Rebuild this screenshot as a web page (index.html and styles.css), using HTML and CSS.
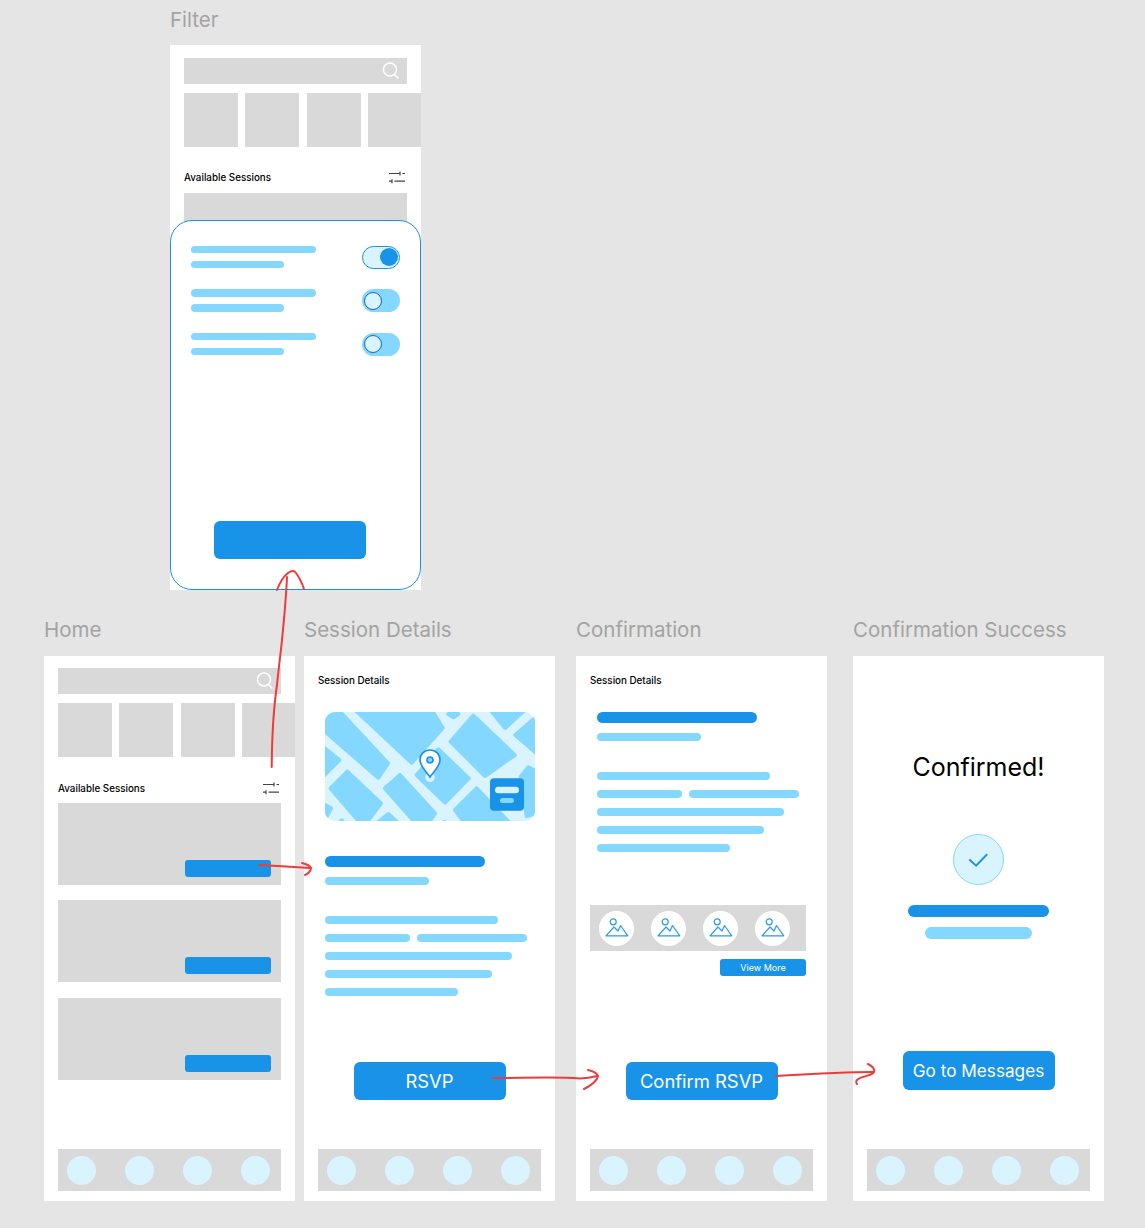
FILE: index.html
```html
<!doctype html>
<html lang="en">
  <head>
    <meta charset="utf-8" />
    <title>Wireframes</title>
    <link rel="stylesheet" href="styles.css">
  </head>
  <body>
    <svg class="defs" width="0" height="0">
      <symbol id="search" viewBox="0 0 18 18">
        <circle cx="8" cy="7.500" r="6.500" fill="none" stroke="#fff" stroke-width="1.5" />
        <path d="M12.500 12.500l4 4" fill="none" stroke="#fff" stroke-width="1.5" />
      </symbol>
      <symbol id="sliders" viewBox="0 0 18 14">
        <path d="M1 2.500h11M12 .500v4M14.500 2.500h2.500M1 10.200h2.500M4 8.200v4M6.500 10.200h10.500" fill="none" stroke="#444" stroke-width="1.200" />
      </symbol>
      <symbol id="picture" viewBox="0 0 35 35">
        <circle cx="14.200" cy="10.800" r="3" fill="none" stroke="#2a9bea" stroke-width="1.200" />
        <path d="M7 24.800l8-8.800 4 4 2.500-5.500 7.300 10.300z" fill="none" stroke="#2a9bea" stroke-width="1.200" stroke-linejoin="round" />
      </symbol>
    </svg>

    <section class="screen screen-filter">
      <h2 class="screen-name">Filter</h2>
      <div class="frame frame-home frame-filter">
        <div class="search"><svg class="search-icon"><use href="#search" /></svg></div>
        <div class="tiles">
          <div class="tile"></div><div class="tile"></div><div class="tile"></div><div class="tile"></div>
        </div>
        <div class="list-head">
          <span class="small-title">Available Sessions</span>
          <svg class="sliders"><use href="#sliders" /></svg>
        </div>
        <div class="card"></div>

        <div class="sheet">
          <div class="sheet-row">
            <div class="sheet-text"><div class="line line-long"></div><div class="line line-short"></div></div>
            <div class="toggle toggle-on"><span class="knob"></span></div>
          </div>
          <div class="sheet-row">
            <div class="sheet-text"><div class="line line-long"></div><div class="line line-short"></div></div>
            <div class="toggle"><span class="knob"></span></div>
          </div>
          <div class="sheet-row">
            <div class="sheet-text"><div class="line line-long"></div><div class="line line-short"></div></div>
            <div class="toggle"><span class="knob"></span></div>
          </div>
          <div class="btn sheet-btn"></div>
        </div>
      </div>
    </section>

    <section class="screen screen-home">
      <h2 class="screen-name">Home</h2>
      <div class="frame frame-home">
        <div class="search"><svg class="search-icon"><use href="#search" /></svg></div>
        <div class="tiles">
          <div class="tile"></div><div class="tile"></div><div class="tile"></div><div class="tile"></div>
        </div>
        <div class="list-head">
          <span class="small-title">Available Sessions</span>
          <svg class="sliders"><use href="#sliders" /></svg>
        </div>
        <div class="cards">
          <div class="card"><div class="card-btn"></div></div>
          <div class="card"><div class="card-btn"></div></div>
          <div class="card"><div class="card-btn"></div></div>
        </div>
        <div class="nav"><span></span><span></span><span></span><span></span></div>
      </div>
    </section>

    <section class="screen screen-details">
      <h2 class="screen-name">Session Details</h2>
      <div class="frame">
        <div class="small-title page-title">Session Details</div>
        <svg class="map" viewBox="45 36 630 327">
          <rect x="45" y="36" width="630" height="327" fill="#d9f3ff" />
          <g fill="#84d7ff" stroke="#84d7ff" stroke-width="12" stroke-linejoin="round">
            <polygon points="136,30 365,30 398,84 305,188" />
            <polygon points="85,30 234,190 205,233 51,100 40,30" />
            <polygon points="415,42 445,42 430,52" />
            <polygon points="490,47 614,165 525,228 422,125" />
            <polygon points="542,30 644,30 585,84" />
            <polygon points="616,105 680,50 680,160" />
            <polygon points="40,142 88,180 40,228" />
            <polygon points="385,148 476,235 405,308 320,225" />
            <polygon points="112,215 213,310 168,370 152,370 62,265" />
            <polygon points="270,225 375,340 355,370 318,370 225,265" />
            <polygon points="500,265 600,370 465,370 435,330" />
            <polygon points="655,202 680,215 680,340 650,348 632,230" />
            <polygon points="40,312 63,325 50,350 40,350" />
            <polygon points="235,342 265,370 200,370" />
            <polygon points="95,361 100,370 88,370" />
            <polygon points="404,366 408,370 400,370" />
          </g>
          <circle cx="360" cy="232" r="14" fill="#d9f3ff" />
          <path d="M360 150c-18 0-30 13-30 29 0 20 18 35 30 52 12-17 30-32 30-52 0-16-12-29-30-29z" fill="#fff" stroke="#1893e8" stroke-width="5" />
          <circle cx="360" cy="180" r="9" fill="#84d7ff" stroke="#1893e8" stroke-width="5" />
          <rect x="540" y="235" width="102" height="97" rx="12" fill="#1893e8" />
          <rect x="555" y="260" width="72" height="20" rx="10" fill="#d9f3ff" />
          <rect x="570" y="294" width="42" height="15" rx="7.500" fill="#84d7ff" />
        </svg>
        <div class="bar bar-main indent"></div>
        <div class="line line-sub indent"></div>
        <div class="para indent">
          <div class="line para-a"></div>
          <div class="para-split"><div class="line para-b"></div><div class="line para-c"></div></div>
          <div class="line para-d"></div>
          <div class="line para-e"></div>
          <div class="line para-f"></div>
        </div>
        <div class="btn details-btn">RSVP</div>
        <div class="nav"><span></span><span></span><span></span><span></span></div>
      </div>
    </section>

    <section class="screen screen-confirm">
      <h2 class="screen-name">Confirmation</h2>
      <div class="frame">
        <div class="small-title page-title">Session Details</div>
        <div class="bar bar-main indent confirm-bar"></div>
        <div class="line line-sub indent"></div>
        <div class="para indent confirm-para">
          <div class="line para-a"></div>
          <div class="para-split"><div class="line para-b"></div><div class="line para-c"></div></div>
          <div class="line para-d"></div>
          <div class="line para-e"></div>
          <div class="line para-f"></div>
        </div>
        <div class="gallery">
          <span class="thumb"><svg><use href="#picture" /></svg></span>
          <span class="thumb"><svg><use href="#picture" /></svg></span>
          <span class="thumb"><svg><use href="#picture" /></svg></span>
          <span class="thumb"><svg><use href="#picture" /></svg></span>
        </div>
        <div class="view-more">View More</div>
        <div class="btn confirm-btn">Confirm RSVP</div>
        <div class="nav"><span></span><span></span><span></span><span></span></div>
      </div>
    </section>

    <section class="screen screen-success">
      <h2 class="screen-name">Confirmation Success</h2>
      <div class="frame frame-center">
        <div class="success-title">Confirmed!</div>
        <div class="check">
          <svg viewBox="0 0 51 51"><path d="M16 25.500l7 6.500 11.500-12" fill="none" stroke="#1893e8" stroke-width="2" /></svg>
        </div>
        <div class="pill pill-dark"></div>
        <div class="pill pill-light"></div>
        <div class="btn success-btn">Go to Messages</div>
        <div class="nav nav-stretch"><span></span><span></span><span></span><span></span></div>
      </div>
    </section>

    <svg class="arrows" viewBox="0 0 1145 1228">
      <path d="M271.700 767C272 735 274 705 277 685C279 665 281 650 282 640C284 620 286 600 287 577" />
      <path d="M277 590C280 582 284 576 288 573C291 571 294 570 296 573C299 577 302 583 304 589" />
      <path d="M259 865C275 866 295 867 310 868" />
      <path d="M302 863C306 864 310 866 311 868C311 871 308 874 305 875" />
      <path d="M493 1078C520 1078 550 1077 573 1078C582 1079 590 1078 597 1076" />
      <path d="M588 1070C592 1071 597 1073 598 1076C597 1081 590 1086 584 1089" />
      <path d="M776 1076C810 1074 845 1072 873 1072" />
      <path d="M868 1064C872 1066 875 1069 874 1072C873 1076 860 1076 857 1080C856 1081 856 1083 857 1084" />
    </svg>
  </body>
</html>
```

FILE: styles.css
```css
html {
  background: #e5e5e5;
}

body {
  margin: 0;
  height: 1228px;
  overflow: hidden;
  position: relative;
  font-family: Inter, "Liberation Sans", sans-serif;
  color: #000;
}

.defs {
  position: absolute;
}

/* frames sit on a free canvas */
.screen {
  position: absolute;
  width: 251px;
  top: 618px;
}

.screen-filter { left: 170px; top: 8px; }
.screen-home { left: 44px; }
.screen-details { left: 304px; }
.screen-confirm { left: 576px; }
.screen-success { left: 853px; }

.screen-name {
  margin: 0 0 14px;
  font-size: 20.500px;
  line-height: 24px;
  font-weight: 400;
  color: #a3a3a3;
  white-space: nowrap;
}

.screen-filter .screen-name {
  margin-bottom: 13px;
}

.frame {
  position: relative;
  height: 545px;
  box-sizing: border-box;
  padding: 18px 14px 10px;
  background: #fff;
  display: flex;
  flex-direction: column;
  overflow: hidden;
}

.frame-home {
  padding-top: 12px;
}

.frame-filter {
  padding-top: 13px;
}

.frame-center {
  align-items: center;
}

/* home parts */
.search {
  flex: none;
  height: 26px;
  background: #d9d9d9;
  display: flex;
  align-items: center;
  justify-content: flex-end;
  padding-right: 7px;
}

.search-icon {
  width: 18px;
  height: 18px;
}

.tiles {
  flex: none;
  display: flex;
  gap: 7.300px;
  margin: 9px -14px 0 0;
}

.tile {
  flex: none;
  width: 54px;
  height: 54px;
  background: #d9d9d9;
}

.list-head {
  flex: none;
  height: 46px;
  box-sizing: border-box;
  padding: 25px 1px 0 0;
  display: flex;
  justify-content: space-between;
}

.frame-filter .list-head {
  padding-top: 24px;
}

.small-title {
  font-size: 9.800px;
  line-height: 14px;
  font-weight: 500;
  white-space: nowrap;
}

.sliders {
  width: 18px;
  height: 14px;
}

.cards {
  display: flex;
  flex-direction: column;
  gap: 15.300px;
}

.card {
  flex: none;
  height: 82px;
  background: #d9d9d9;
  display: flex;
  align-items: flex-end;
  justify-content: flex-end;
  padding: 0 10px 8px 0;
  box-sizing: border-box;
}

.card-btn {
  width: 86px;
  height: 17px;
  border-radius: 3px;
  background: #1893e8;
}

.nav {
  flex: none;
  height: 42px;
  margin-top: auto;
  padding-left: 9px;
  background: #d9d9d9;
  display: flex;
  align-items: center;
  gap: 29px;
}

.nav span {
  width: 29px;
  height: 29px;
  border-radius: 50%;
  background: #d9f3ff;
}

.nav-stretch {
  align-self: stretch;
}

/* filter sheet */
.sheet {
  position: absolute;
  left: 0;
  top: 175px;
  width: 251px;
  height: 370px;
  box-sizing: border-box;
  padding: 24.500px 20px 30px 20px;
  background: #fff;
  border: 1px solid #1893e8;
  border-radius: 22px;
  display: flex;
  flex-direction: column;
  gap: 20px;
}

.sheet-row {
  display: flex;
  justify-content: space-between;
  height: 23.500px;
}

.sheet-text {
  display: flex;
  flex-direction: column;
  gap: 7.500px;
}

.line {
  height: 8px;
  border-radius: 4px;
  background: #84d7ff;
}

.line-long { width: 125px; height: 7.500px; }
.line-short { width: 93px; height: 7.500px; }

.toggle {
  width: 38px;
  height: 23px;
  box-sizing: border-box;
  border-radius: 12px;
  background: #84d7ff;
  display: flex;
  align-items: center;
  padding: 0 2px;
}

.knob {
  width: 18px;
  height: 18px;
  box-sizing: border-box;
  border-radius: 50%;
  background: #d9f3ff;
  border: 1px solid #1568a8;
}

.toggle-on {
  background: #d9f3ff;
  border: 1px solid #1893e8;
  justify-content: flex-end;
  padding: 0 1px;
}

.toggle-on .knob {
  background: #1893e8;
  border: 0;
}

.btn {
  flex: none;
  width: 152px;
  height: 38px;
  border-radius: 6px;
  background: #1893e8;
  color: #fff;
  font-size: 18.400px;
  display: flex;
  align-items: center;
  justify-content: center;
  white-space: nowrap;
}

.sheet-btn {
  margin: auto 0 0 23px;
}

/* detail parts */
.map {
  flex: none;
  width: 210px;
  height: 109px;
  margin: 24px 0 0 7px;
  border-radius: 10px;
}

.indent {
  margin-left: 7px;
}

.bar {
  flex: none;
  height: 11px;
  border-radius: 6px;
  background: #1893e8;
}

.bar-main {
  width: 160px;
  margin-top: 35px;
}

.line-sub {
  flex: none;
  width: 104px;
  margin-top: 10px;
}

.para {
  flex: none;
  width: 202px;
  margin-top: 31px;
  display: flex;
  flex-direction: column;
  gap: 10px;
}

.para-split {
  display: flex;
  gap: 7px;
}

.para-a { width: 173px; }
.para-b { width: 85px; }
.para-c { width: 110px; }
.para-d { width: 187px; }
.para-e { width: 167px; }
.para-f { width: 133px; }

.details-btn {
  align-self: center;
  margin-top: 66px;
}

.confirm-bar {
  margin-top: 24px;
}

.confirm-para {
  margin-top: 31px;
}

.gallery {
  flex: none;
  width: 216px;
  height: 46px;
  margin-top: 53px;
  padding-left: 9px;
  box-sizing: border-box;
  background: #d9d9d9;
  display: flex;
  align-items: center;
  gap: 17px;
}

.thumb {
  width: 35px;
  height: 35px;
  border-radius: 50%;
  background: #fff;
}

.thumb svg {
  display: block;
  width: 35px;
  height: 35px;
}

.view-more {
  flex: none;
  align-self: flex-start;
  width: 86px;
  height: 17px;
  margin: 8px 0 0 130px;
  border-radius: 3px;
  background: #1893e8;
  color: #fff;
  font-size: 9px;
  line-height: 17px;
  text-align: center;
}

.confirm-btn {
  align-self: center;
  margin-top: 86px;
}

/* success */
.success-title {
  margin-top: 77px;
  font-size: 25px;
  line-height: 32px;
}

.check {
  flex: none;
  width: 51px;
  height: 51px;
  margin-top: 51px;
  box-sizing: border-box;
  border: 1px solid #84d7ff;
  border-radius: 50%;
  background: #d9f3ff;
}

.check svg {
  display: block;
  width: 49px;
  height: 49px;
}

.pill {
  flex: none;
  height: 12px;
  border-radius: 6px;
}

.pill-dark {
  width: 141px;
  margin-top: 20px;
  background: #1893e8;
}

.pill-light {
  width: 107px;
  margin-top: 10px;
  background: #84d7ff;
}

.success-btn {
  height: 39px;
  margin-top: 112px;
  font-size: 17.200px;
}

/* hand drawn flow arrows over the frames */
.arrows {
  position: absolute;
  left: 0;
  top: 0;
  width: 1145px;
  height: 1228px;
  pointer-events: none;
  fill: none;
  stroke: #f03a3a;
  stroke-width: 2px;
  stroke-linecap: round;
}
```
